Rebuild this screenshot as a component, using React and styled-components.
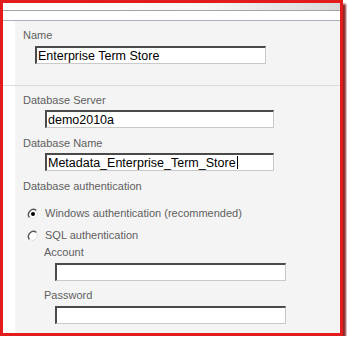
import styled, { createGlobalStyle } from 'styled-components';

const GlobalStyle = createGlobalStyle`
  html, body {
    margin: 0;
    padding: 0;
    background: #ffffff;
  }
  body {
    font-family: Tahoma, "DejaVu Sans", "Liberation Sans", sans-serif;
  }
`;

const Frame = styled.div`
  width: 337px;
  height: 330px;
  border: 3px solid #e31b1b;
  box-shadow: 3px 4px 2px #8c2a2a;
  display: flex;
  flex-direction: column;
  overflow: hidden;
  background: #ffffff;
`;

const TopBand = styled.div`
  height: 7px;
  background: linear-gradient(to right, #ffffff 0%, #f7f7f7 60%, #d9d9d9 100%);
  border-bottom: 1px solid #a3a3a3;
`;

const SubBand = styled.div`
  height: 9px;
  background: #ffffff;
  border-bottom: 1px solid #a8b1bc;
`;

const Body = styled.div`
  flex: 1;
  display: flex;
  flex-direction: column;
`;

const Section = styled.div`
  display: flex;
  border-bottom: ${(p) => (p.$divider ? '1px solid #dcdcdc' : 'none')};
  flex: ${(p) => (p.$grow ? 1 : 'none')};
`;

const Gutter = styled.div`
  width: 12px;
  background: #ffffff;
`;

const Panel = styled.div`
  flex: 1;
  background: #f4f4f4;
  padding: ${(p) => p.$pad};
  display: flex;
  flex-direction: column;
`;

const Label = styled.div`
  font-family: "Liberation Sans", Arial, sans-serif;
  font-size: 11px;
  line-height: 13px;
  color: #5f5f5f;
  margin-left: ${(p) => p.$indent || 0}px;
  margin-top: ${(p) => p.$top || 0}px;
`;

const Field = styled.div`
  box-sizing: border-box;
  width: ${(p) => p.$w}px;
  height: 18px;
  margin-left: ${(p) => p.$indent}px;
  margin-top: ${(p) => p.$top || 0}px;
  background: #ffffff;
  border-top: 2px solid #4a4a4a;
  border-left: 2px solid #4a4a4a;
  border-right: 1px solid #c9c9c9;
  border-bottom: 1px solid #c9c9c9;
  font-family: "Liberation Sans", Arial, sans-serif;
  font-size: 12.5px;
  line-height: 14px;
  color: #000000;
  padding-left: 1px;
  white-space: nowrap;
  overflow: hidden;
  display: flex;
  align-items: center;
`;

const Caret = styled.span`
  display: inline-block;
  width: 1px;
  height: 13px;
  background: #000000;
  margin-left: 1px;
`;

const RadioRow = styled.label`
  display: flex;
  align-items: center;
  gap: 6px;
  margin-left: 4px;
  margin-top: ${(p) => p.$top}px;
  font-family: "Liberation Sans", Arial, sans-serif;
  font-size: 11px;
  line-height: 13px;
  color: #5f5f5f;
`;

function Radio({ checked }) {
  return (
    <svg width="12" height="12" viewBox="0 0 12 12">
      <circle cx="6" cy="6" r="5" fill="#ffffff" />
      <path d="M 9.5 2.5 A 5 5 0 0 0 2.5 9.5" fill="none" stroke="#555" strokeWidth="1.4" />
      <path d="M 2.5 9.5 A 5 5 0 0 0 9.5 2.5" fill="none" stroke="#e0e0e0" strokeWidth="1" />
      {checked && <circle cx="6" cy="6" r="2" fill="#000" />}
    </svg>
  );
}

export default function App() {
  return (
    <>
      <GlobalStyle />
      <Frame>
        <TopBand />
        <SubBand />
        <Body>
          <Section $divider>
            <Gutter />
            <Panel $pad="8px 0 21px 8px">
              <Label>Name</Label>
              <Field $w={231} $indent={12} $top={4}>Enterprise Term Store</Field>
            </Panel>
          </Section>
          <Section $grow>
            <Gutter />
            <Panel $pad="8px 0 0 8px">
              <Label>Database Server</Label>
              <Field $w={229} $indent={22} $top={3}>demo2010a</Field>
              <Label $top={9}>Database Name</Label>
              <Field $w={229} $indent={22} $top={3}>
                Metadata_Enterprise_Term_Store
                <Caret />
              </Field>
              <Label $top={9}>Database authentication</Label>
              <RadioRow $top={14}>
                <Radio checked />
                Windows authentication (recommended)
              </RadioRow>
              <RadioRow $top={9}>
                <Radio />
                SQL authentication
              </RadioRow>
              <Label $indent={21} $top={4}>Account</Label>
              <Field $w={231} $indent={32} $top={4}></Field>
              <Label $indent={21} $top={8}>Password</Label>
              <Field $w={231} $indent={32} $top={4}></Field>
            </Panel>
          </Section>
        </Body>
      </Frame>
    </>
  );
}
